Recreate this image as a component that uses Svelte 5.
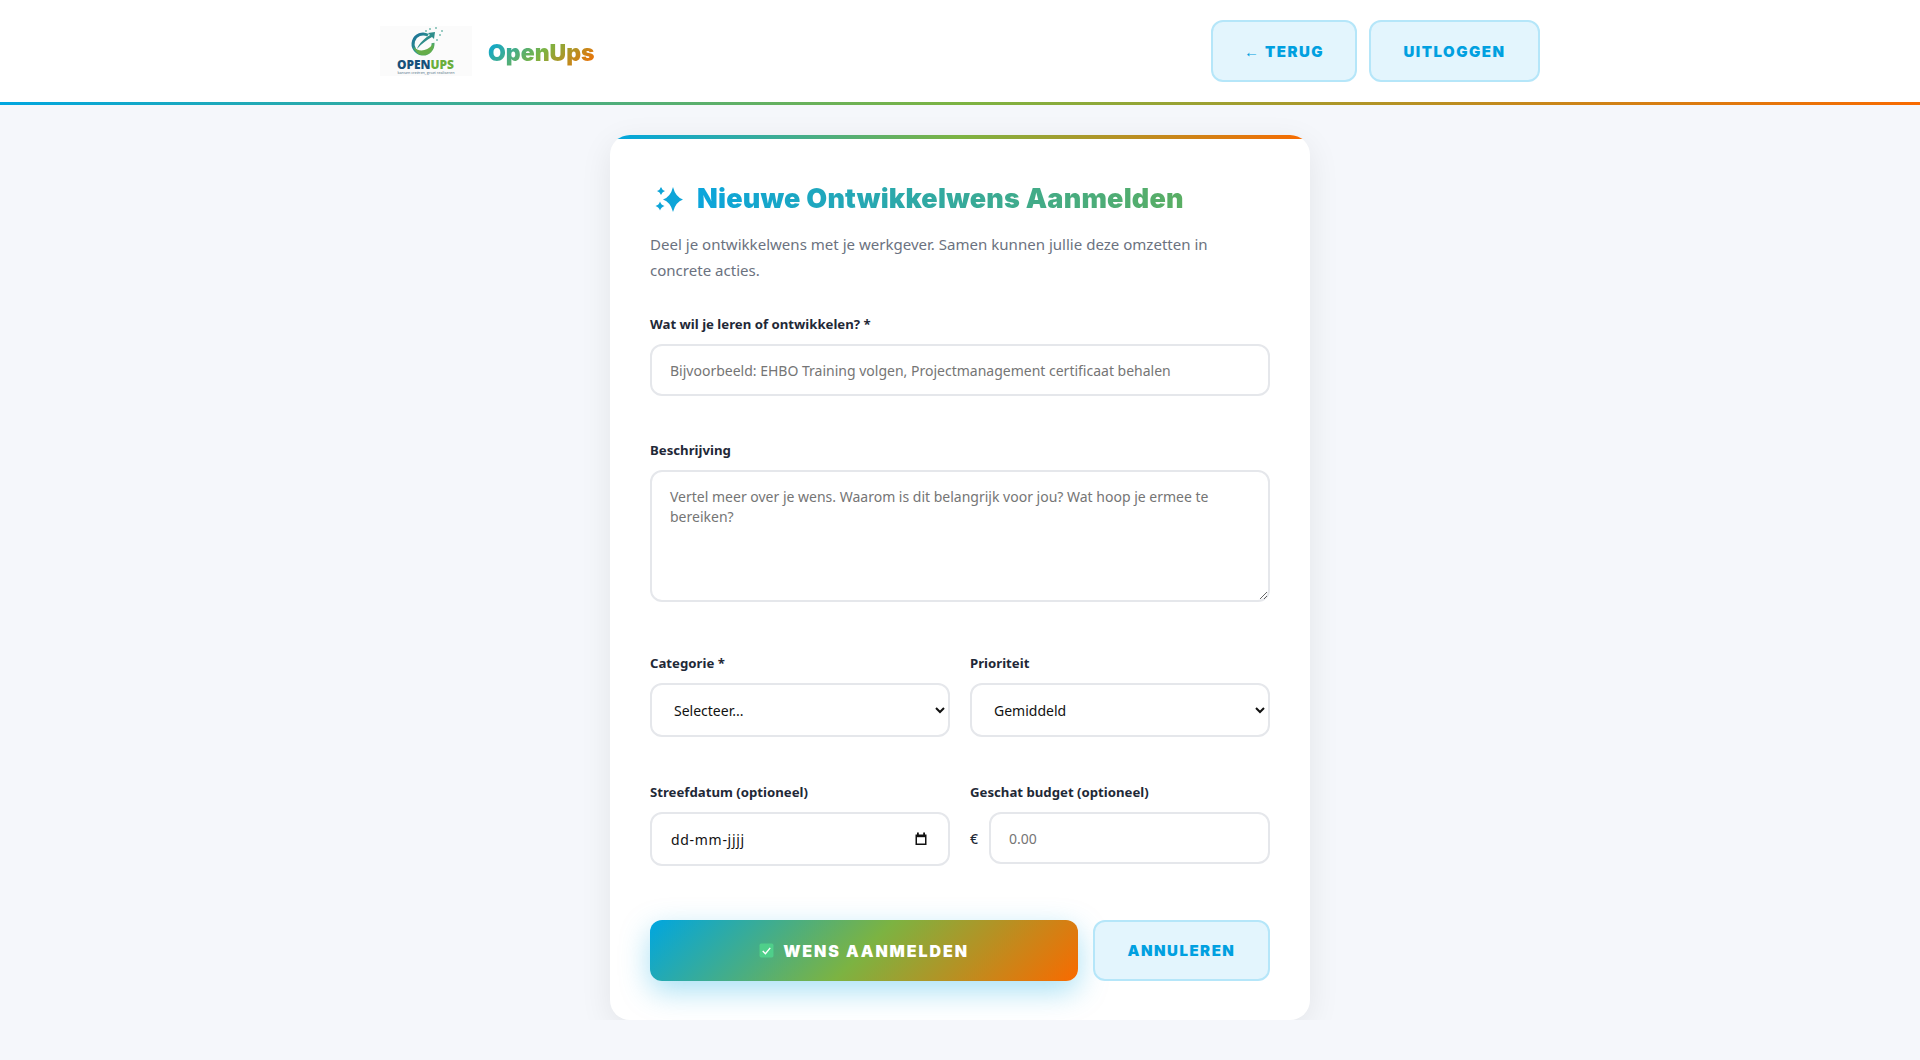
<script>
	let title = $state("");
	let description = $state("");
	let category = $state("");
	let priority = $state("medium");
	let targetDate = $state("");
	let budget = $state("");
</script>

<header class="topbar">
	<div class="topbar-inner">
		<div class="brand">
			<svg class="logo" viewBox="0 0 92 50" role="img" aria-label="OpenUps logo">
				<defs>
					<linearGradient id="ring" x1="0" y1="0" x2="1" y2="1">
						<stop offset="0" stop-color="#1a6d9a" />
						<stop offset="0.55" stop-color="#2f9a8a" />
						<stop offset="1" stop-color="#6db544" />
					</linearGradient>
				</defs>
				<rect width="92" height="50" fill="#fbfbfb" />
				<path d="M48 9.300A10 10 0 1 0 53 17" fill="none" stroke="url(#ring)" stroke-width="3" />
				<path d="M33.500 21c5 5 13 5 19.500-3 0 7-5 11.500-11 11-4-.3-7-4-8.500-8z" fill="#66ad48" />
				<path d="M37 23c2-6 8-11 13-14l-2-2 7-1-1 7-2-2c-5 3-10 6-15 12z" fill="#2e8d8a" />
				<g fill="#78bdb0">
					<circle cx="46" cy="5" r="1" /><circle cx="50" cy="3" r="1" /><circle cx="56" cy="2" r="1" />
					<circle cx="60" cy="9" r="1" /><circle cx="57" cy="14" r="1" /><circle cx="62" cy="5" r="1" />
				</g>
				<text x="17" y="43" class="logo-name" textLength="57" lengthAdjust="spacingAndGlyphs"><tspan fill="#17517a">OPEN</tspan><tspan fill="#6aae3c">UPS</tspan></text>
				<text x="46" y="48" class="logo-tag" text-anchor="middle">kansen creëren, groei realiseren</text>
			</svg>
			<span class="brand-name">OpenUps</span>
		</div>
		<nav class="topbar-actions">
			<button class="btn btn-light btn-nav back"><span class="arrow">←</span> Terug</button>
			<button class="btn btn-light btn-nav logout">Uitloggen</button>
		</nav>
	</div>
</header>

<main class="page">
	<section class="card">
		<h1>
			<svg class="sparkle" viewBox="0 0 32 32" aria-hidden="true">
				<path d="M19 4Q21.500 14 29 16.500Q21.500 19 19 29Q16.500 19 9 16.500Q16.500 14 19 4z" fill="#0ea5d8" />
				<path d="M7 4Q8 7 11 8Q8 9 7 12Q6 9 3 8Q6 7 7 4z" fill="#0ea5d8" />
				<path d="M6 18.500Q7 22 10.500 23Q7 24 6 27.500Q5 24 1.500 23Q5 22 6 18.500z" fill="#0ea5d8" />
			</svg>
			<span class="grad-text">Nieuwe Ontwikkelwens Aanmelden</span>
		</h1>
		<p class="intro">Deel je ontwikkelwens met je werkgever. Samen kunnen jullie deze omzetten in concrete acties.</p>

		<form onsubmit={(e) => e.preventDefault()}>
			<div class="field first">
				<label for="title">Wat wil je leren of ontwikkelen? *</label>
				<input id="title" type="text" bind:value={title} placeholder="Bijvoorbeeld: EHBO Training volgen, Projectmanagement certificaat behalen" />
			</div>

			<div class="field desc">
				<label for="description">Beschrijving</label>
				<textarea id="description" bind:value={description} placeholder="Vertel meer over je wens. Waarom is dit belangrijk voor jou? Wat hoop je ermee te bereiken?"></textarea>
			</div>

			<div class="row">
				<div class="field">
					<label for="category">Categorie *</label>
					<select id="category" bind:value={category}>
						<option value="">Selecteer...</option>
						<option value="training">Training</option>
						<option value="opleiding">Opleiding</option>
					</select>
				</div>
				<div class="field">
					<label for="priority">Prioriteit</label>
					<select id="priority" bind:value={priority}>
						<option value="low">Laag</option>
						<option value="medium">Gemiddeld</option>
						<option value="high">Hoog</option>
					</select>
				</div>
			</div>

			<div class="row last">
				<div class="field">
					<label for="date">Streefdatum (optioneel)</label>
					<div class="date-box">
						<span class="date-text">dd-mm-jjjj</span>
						<svg class="cal" viewBox="0 0 14 14" aria-hidden="true">
							<path d="M1.500 2.500h11v10.500h-11z M3 0.500h1.800v2H3z M9.200 0.500H11v2H9.200z" fill="#111" />
							<rect x="3" y="5.200" width="8" height="6.300" fill="#fff" />
						</svg>
						<input id="date" class="sr" type="text" bind:value={targetDate} />
					</div>
				</div>
				<div class="field">
					<label for="budget">Geschat budget (optioneel)</label>
					<div class="budget">
						<span class="euro">€</span>
						<input id="budget" type="text" bind:value={budget} placeholder="0.00" />
					</div>
				</div>
			</div>

			<div class="actions">
				<button type="submit" class="btn btn-primary">
					<svg class="check" viewBox="0 0 14 14" aria-hidden="true">
						<rect x="0.500" y="0.500" width="13" height="13" rx="1.500" fill="#4fcf8a" />
						<path d="M3.500 7.500l2.500 2.500 4.500-5.500" fill="none" stroke="#fff" stroke-width="1.300" />
					</svg>
					Wens aanmelden
				</button>
				<button type="button" class="btn btn-light cancel">Annuleren</button>
			</div>
		</form>
	</section>
</main>

<style>
	:global(body) {
		background: #f5f7fb;
		font-family: "Noto Sans", "Open Sans", sans-serif;
		color: #1f2937;
	}

	.topbar {
		background: #fff;
		height: 102px;
		position: relative;
		border-bottom: 3px solid transparent;
		border-image: linear-gradient(90deg, #00a6e0, #7cb342, #f96a00) 1;
	}
	.topbar-inner {
		max-width: 1160px;
		margin: 0 auto;
		padding-top: 20px;
		display: flex;
		justify-content: space-between;
		align-items: flex-start;
	}
	.brand {
		display: flex;
		align-items: center;
		gap: 16px;
		padding-top: 6px;
	}
	.logo {
		width: 92px;
		height: 50px;
		display: block;
	}
	.logo-name {
		font-family: "Open Sans", sans-serif;
		font-size: 12.500px;
		font-weight: 800;
	}
	.logo-tag {
		font-family: "Open Sans", sans-serif;
		font-size: 3.800px;
		fill: #4b6b80;
	}
	.brand-name {
		font-family: Inter, sans-serif;
		font-size: 23px;
		font-weight: 900;
		margin-top: 4px;
		background: linear-gradient(135deg, #00a6e0, #7cb342, #f96a00);
		-webkit-background-clip: text;
		background-clip: text;
		color: transparent;
	}
	.topbar-actions {
		display: flex;
		gap: 12px;
	}

	.btn {
		font-family: Inter, sans-serif;
		font-weight: 900;
		text-transform: uppercase;
		letter-spacing: 1.500px;
		border-radius: 12px;
		cursor: pointer;
	}
	.btn-light {
		background: #e3f5fd;
		border: 2px solid #b5e6f9;
		color: #00a0e0;
		font-size: 15px;
	}
	.btn-nav {
		height: 62px;
	}
	.back {
		width: 146px;
	}
	.arrow {
		font-family: "Noto Sans", sans-serif;
		font-weight: 400;
	}
	.logout {
		width: 171px;
	}

	.page {
		display: flex;
		justify-content: center;
		padding-top: 30px;
	}
	.card {
		width: 620px;
		height: 805px;
		padding: 40px;
		background: #fff;
		border-radius: 20px;
		position: relative;
		overflow: hidden;
		box-shadow: 0 8px 32px rgba(0, 0, 0, 0.08);
	}
	.card::before {
		content: "";
		position: absolute;
		top: 0;
		left: 0;
		right: 0;
		height: 4px;
		background: linear-gradient(90deg, #00a6e0, #7cb342, #f96a00);
	}

	h1 {
		margin: 4px 0 0;
		height: 40px;
		display: flex;
		align-items: center;
		gap: 11px;
		font-family: Inter, sans-serif;
		font-size: 27px;
		font-weight: 900;
		letter-spacing: 0.2px;
		line-height: 40px;
	}
	.sparkle {
		width: 32px;
		height: 32px;
		flex: none;
		margin-left: 4px;
	}
	.grad-text {
		background: linear-gradient(90deg, #0ba5dc, #5aae63);
		-webkit-background-clip: text;
		background-clip: text;
		color: transparent;
	}
	.intro {
		margin: 12px 0 0;
		font-size: 15.050px;
		line-height: 26px;
		color: #6b7280;
	}

	.field {
		display: flex;
		flex-direction: column;
		flex: 1;
		min-width: 0;
	}
	.first {
		margin-top: 31px;
	}
	.desc {
		margin-top: 44px;
	}
	label {
		font-size: 13.200px;
		font-weight: 700;
		line-height: 20px;
		margin-bottom: 10px;
		color: #1f2937;
	}
	input,
	textarea,
	select,
	.date-box {
		box-sizing: border-box;
		width: 100%;
		font-family: "Noto Sans", sans-serif;
		font-size: 14px;
		background: #fff;
		border: 2px solid #e5e7eb;
		border-radius: 12px;
		color: #111;
		outline: none;
	}
	input {
		height: 52px;
		padding: 0 18px;
	}
	textarea {
		display: block;
		height: 132px;
		padding: 15px 18px;
		resize: vertical;
		line-height: 20px;
	}
	::placeholder {
		color: #757575;
		opacity: 1;
	}
	select {
		height: 54px;
		padding: 0 18px;
	}
	.row {
		display: flex;
		gap: 20px;
		margin-top: 51px;
	}
	.row.last {
		margin-top: 45px;
	}
	.date-box {
		height: 54px;
		padding: 0 20px 0 19px;
		display: flex;
		align-items: center;
		justify-content: space-between;
		position: relative;
	}
	.date-text {
		color: #111;
		letter-spacing: 0.7px;
	}
	.cal {
		width: 14px;
		height: 14px;
	}
	.sr {
		position: absolute;
		width: 1px;
		height: 1px;
		padding: 0;
		border: 0;
		opacity: 0;
	}
	.budget {
		display: flex;
		align-items: center;
		gap: 11px;
	}
	.euro {
		font-size: 14px;
		font-weight: 500;
	}

	.actions {
		display: flex;
		gap: 15px;
		margin-top: 54px;
	}
	.btn-primary {
		width: 428px;
		height: 61px;
		border: 0;
		background: linear-gradient(135deg, #00a6e0, #7cb342, #f96a00);
		color: #fff;
		font-size: 16px;
		letter-spacing: 1.900px;
		box-shadow: 0 10px 30px rgba(0, 166, 224, 0.35);
		display: flex;
		align-items: center;
		justify-content: center;
		gap: 9px;
	}
	.check {
		width: 15px;
		height: 15px;
	}
	.cancel {
		flex: 1;
		height: 61px;
	}
</style>
